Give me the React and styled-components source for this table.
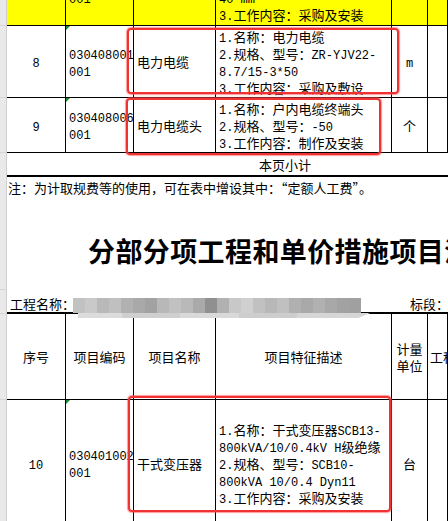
import React from "react";
import styled, { createGlobalStyle, css } from "styled-components";

const GlobalStyle = createGlobalStyle`
  html, body {
    margin: 0;
    padding: 0;
    background: #fff;
    overflow: hidden;
  }
  body {
    font-family: "Noto Sans CJK SC", sans-serif;
    color: #000;
  }
`;

const COLUMNS = "7px 59px 68px 82px 176px 36px 1fr";

const Sheet = styled.div`
  width: 448px;
  margin-top: -47px;
  font-size: 13px;
`;

const GridRow = styled.div`
  position: relative;
  display: grid;
  grid-template-columns: ${COLUMNS};
  height: ${(p) => p.$h}px;
  background: ${(p) => p.$fill || "#fff"};
`;

const Band = styled.div`
  position: relative;
  display: grid;
  grid-template-columns: ${(p) => p.$cols || "7px 1fr"};
  height: ${(p) => p.$h}px;
`;

const Gutter = styled.div`
  box-sizing: border-box;
  background: #e9e9e9;
  border-right: 1px solid #cfcfcf;
  border-bottom: 1px solid #d6d6d6;
`;

const Cell = styled.div`
  position: relative;
  box-sizing: border-box;
  display: flex;
  flex-direction: column;
  justify-content: center;
  align-items: ${(p) => (p.$center ? "center" : "flex-start")};
  padding: 0 ${(p) => p.$pad ?? 3}px;
  border-right: ${(p) => (p.$open ? "none" : "1px solid #000")};
  border-bottom: ${(p) => p.$bottom ?? 1}px solid #000;
  overflow: hidden;
  white-space: nowrap;

  ${(p) =>
    p.$mark &&
    css`
      &::before {
        content: "";
        position: absolute;
        top: 0;
        left: 0;
        border-top: 4px solid #1f8a2b;
        border-right: 4px solid transparent;
      }
    `}
`;

const Line = styled.div`
  height: 17px;
  line-height: 17px;
  white-space: nowrap;
`;

const Latin = styled.span`
  font-family: "Liberation Mono", monospace;
  font-size: 12px;
`;

const Subtotal = styled.div`
  grid-column: 2 / -1;
  box-sizing: border-box;
  border-bottom: 2px solid #000;
  padding: 1px 0 0 252px;
  line-height: 21px;
`;

const Note = styled.div`
  padding: 1px 0 0 1px;
  line-height: 22px;
  white-space: nowrap;
`;

const Title = styled.h1`
  margin: 0;
  padding: 13px 0 0 81px;
  display: flex;
  align-items: center;
  font-size: 27px;
  font-weight: 700;
  letter-spacing: 0.4px;
  white-space: nowrap;
  overflow: hidden;
`;

const Field = styled.div`
  box-sizing: border-box;
  display: flex;
  align-items: flex-end;
  padding-left: ${(p) => p.$pad || 0}px;
  border-bottom: 2px solid #000;
  line-height: 17px;
  white-space: nowrap;
  overflow: hidden;
`;

const Mosaic = styled.div`
  position: absolute;
  left: 73px;
  top: 8px;
  z-index: 1;
  display: flex;
  flex-direction: column;
`;

const MosaicTiles = styled.div`
  display: flex;
  height: 15px;
`;

const Tile = styled.div`
  width: 12px;
  background: ${(p) => p.$shade};
`;

const MosaicEdge = styled.div`
  margin-left: 5px;
  width: 292px;
  height: 5px;
  background: linear-gradient(
    90deg,
    #dcdcdc 0 15%,
    #cfcfcf 15% 35%,
    #d9d9d9 35% 55%,
    #cdcdcd 55% 75%,
    #d6d6d6 75% 100%
  );
  clip-path: polygon(0 0, 100% 0, 96% 100%, 0 100%);
`;

const Highlight = styled.div`
  position: absolute;
  z-index: 2;
  left: ${(p) => p.$x}px;
  top: ${(p) => p.$y}px;
  width: ${(p) => p.$w}px;
  height: ${(p) => p.$hh}px;
  box-sizing: border-box;
  border: 2px solid #f03232;
  border-radius: 4px;
  box-shadow: 0 0 0 1px rgba(255, 90, 90, 0.45), 0 0 3px rgba(255, 0, 0, 0.35);
  pointer-events: none;
`;

const TILE_SHADES = [
  "#c2c2c2", "#c9c9c9", "#b9b9b9", "#c0c0c0", "#b1b1b1", "#a9a9a9",
  "#a2a2a2", "#b8b8b8", "#c1c1c1", "#b9b9b9", "#aaaaaa", "#909090",
  "#b1b1b1", "#c8c8c8", "#d0d0d0", "#c1c1c1", "#b8b8b8", "#c0c0c0",
  "#b0b0b0", "#a9a9a9", "#b1b1b1", "#a8a8a8", "#a2a2a2", "#a0a0a0",
];

const ROWS = [
  {
    no: "7",
    code: ["030408001", "001"],
    name: "电力电缆",
    desc: ["1.名称：电缆保护管", "2.规格、型号：SC50", "40 mm", "3.工作内容：采购及安装"],
    unit: "m",
    h: 73,
    fill: "#ffff00",
  },
  {
    no: "8",
    code: ["030408001", "001"],
    name: "电力电缆",
    desc: ["1.名称：电力电缆", "2.规格、型号：ZR-YJV22-", "8.7/15-3*50", "3.工作内容：采购及敷设"],
    unit: "m",
    h: 72,
    mark: { x: 127, y: 2, w: 272, h: 66 },
  },
  {
    no: "9",
    code: ["030408006", "001"],
    name: "电力电缆头",
    desc: ["1.名称：户内电缆终端头", "2.规格、型号：-50", "3.工作内容：制作及安装"],
    unit: "个",
    h: 55,
    mark: { x: 126, y: 0, w: 255, h: 57 },
  },
];

const ITEM_10 = {
  no: "10",
  code: ["030401002", "001"],
  name: "干式变压器",
  desc: [
    "1.名称：干式变压器SCB13-",
    "800kVA/10/0.4kV H级绝缘",
    "2.规格、型号：SCB10-",
    "800kVA 10/0.4 Dyn11",
    "3.工作内容：采购及安装",
  ],
  unit: "台",
  h: 127,
  mark: { x: 128, y: -4, w: 263, h: 116 },
};

function Mixed({ text }) {
  return text
    .split(/([\x20-\x7e]+)/)
    .filter(Boolean)
    .map((part, i) =>
      /^[\x20-\x7e]+$/.test(part) ? <Latin key={i}>{part}</Latin> : <span key={i}>{part}</span>
    );
}

function ItemRow({ row }) {
  return (
    <GridRow $h={row.h} $fill={row.fill}>
      <Gutter />
      <Cell $center>
        <Line>
          <Mixed text={row.no} />
        </Line>
      </Cell>
      <Cell $mark={!row.fill}>
        {row.code.map((c) => (
          <Line key={c}>
            <Latin>{c}</Latin>
          </Line>
        ))}
      </Cell>
      <Cell>
        <Line>{row.name}</Line>
      </Cell>
      <Cell>
        {row.desc.map((d) => (
          <Line key={d}>
            <Mixed text={d} />
          </Line>
        ))}
      </Cell>
      <Cell $center>
        <Line>
          <Mixed text={row.unit} />
        </Line>
      </Cell>
      <Cell />
      {row.mark && (
        <Highlight $x={row.mark.x} $y={row.mark.y} $w={row.mark.w} $hh={row.mark.h} />
      )}
    </GridRow>
  );
}

export default function App() {
  return (
    <>
      <GlobalStyle />
      <Sheet>
        {ROWS.map((row) => (
          <ItemRow key={row.no} row={row} />
        ))}

        <GridRow $h={23}>
          <Gutter />
          <Subtotal>本页小计</Subtotal>
        </GridRow>

        <Band $h={22}>
          <Gutter />
          <Note>注：为计取规费等的使用，可在表中增设其中：“定额人工费”。</Note>
        </Band>

        <Band $h={92}>
          <Gutter />
          <Title>分部分项工程和单价措施项目清单与计价表</Title>
        </Band>

        <Band $h={24} $cols="7px 403px 1fr">
          <Gutter />
          <Field $pad={3}>工程名称：</Field>
          <Field>标段：</Field>
          <Mosaic>
            <MosaicTiles>
              {TILE_SHADES.map((shade, i) => (
                <Tile key={i} $shade={shade} />
              ))}
            </MosaicTiles>
            <MosaicEdge />
          </Mosaic>
        </Band>

        <GridRow $h={86}>
          <Gutter />
          <Cell $center>序号</Cell>
          <Cell $center>项目编码</Cell>
          <Cell $center>项目名称</Cell>
          <Cell $center>项目特征描述</Cell>
          <Cell $center>
            <Line>计量</Line>
            <Line>单位</Line>
          </Cell>
          <Cell $pad={2}>工程量</Cell>
        </GridRow>

        <ItemRow row={ITEM_10} />
      </Sheet>
    </>
  );
}
